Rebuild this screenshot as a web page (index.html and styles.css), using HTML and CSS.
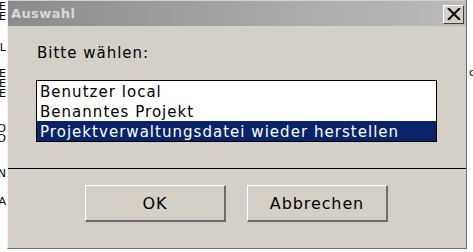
FILE: index.html
```html
<!DOCTYPE html>
<html>
<head>
<meta charset="utf-8">
<link rel="stylesheet" href="styles.css">
</head>
<body>
<div class="desk">
  <div class="bg-left">
    <span class="frag f1">E</span>
    <span class="frag f2">E</span>
    <span class="frag f3">L</span>
    <span class="frag f4">E</span>
    <span class="frag f5">E</span>
    <span class="frag f6">E</span>
    <span class="frag f7">O</span>
    <span class="frag f8">O</span>
    <span class="frag f9">N</span>
    <span class="frag f10">A</span>
  </div>
  <div class="dialog">
    <div class="titlebar">
      <span class="title">Auswahl</span>
      <span class="close"><svg width="14" height="12" viewBox="0 0 14 12"><path d="M1 0 L13 12 M13 0 L1 12" stroke="#000" stroke-width="2"/></svg></span>
    </div>
    <div class="content">
      <div class="prompt">Bitte wählen:</div>
      <div class="listbox">
        <div class="item">Benutzer local</div>
        <div class="item">Benanntes Projekt</div>
        <div class="item selected">Projektverwaltungsdatei wieder herstellen</div>
      </div>
    </div>
    <div class="separator"></div>
    <div class="buttons">
      <div class="btn">OK</div>
      <div class="btn">Abbrechen</div>
    </div>
  </div>
  <div class="bg-right">
    <span class="frag r1">c</span>
  </div>
</div>
</body>
</html>
```
FILE: styles.css
```css
html, body {
  margin: 0;
  padding: 0;
  background: #fff;
}
.desk {
  position: relative;
  width: 473px;
  height: 252px;
  overflow: hidden;
  display: flex;
  align-items: flex-start;
  font-family: "DejaVu Sans", sans-serif;
}
.bg-left {
  position: relative;
  width: 7px;
  height: 252px;
  flex: none;
  overflow: hidden;
}
.bg-right {
  position: relative;
  flex: 1;
  height: 252px;
  overflow: hidden;
}
.frag {
  position: absolute;
  font-family: "DejaVu Sans", sans-serif;
  font-size: 11px;
  line-height: 9px;
  height: 9px;
  color: #000;
}
.bg-left .frag { right: 1px; }
.f1 { top: 2px; }
.f2 { top: 12px; }
.f3 { top: 43px; }
.f4 { top: 69px; }
.f5 { top: 79px; }
.f6 { top: 89px; }
.f7 { top: 124px; }
.f8 { top: 134px; }
.f9 { top: 169px; }
.f10 { top: 197px; }
.r1 { left: 2px; top: 68px; }

.dialog {
  width: 458px;
  height: 248px;
  flex: none;
  background: #d4d0c8;
  border-left: 1px solid #f4f3ef;
  border-right: 1px solid #707070;
  border-bottom: 1px solid #707070;
  display: flex;
  flex-direction: column;
}
.titlebar {
  margin-top: 1px;
  height: 25px;
  background: linear-gradient(to right, #8c8c8c, #bcbcbc);
  display: flex;
  align-items: center;
  justify-content: space-between;
  padding: 0 2px 0 3px;
  flex: none;
}
.title {
  font-family: "DejaVu Sans", sans-serif;
  font-weight: bold;
  font-size: 13px;
  letter-spacing: 0.4px;
  color: #d8d8d8;
}
.close {
  width: 19px;
  height: 17px;
  margin-top: 1px;
  background: #d4d0c8;
  border-top: 1px solid #fff;
  border-left: 1px solid #fff;
  border-right: 1px solid #404040;
  border-bottom: 1px solid #404040;
  display: flex;
  align-items: center;
  justify-content: center;
}
.content {
  padding: 18px 0 0 28px;
  flex: none;
}
.prompt {
  font-size: 15px;
  line-height: 18px;
  letter-spacing: 1px;
  color: #000;
  padding-left: 1px;
}
.listbox {
  margin-top: 18px;
  width: 399px;
  border: 1px solid #000;
  background: #fff;
}
.item {
  font-size: 15px;
  line-height: 20px;
  height: 20px;
  box-sizing: border-box;
  padding: 1px 0 0 3px;
  letter-spacing: 1.03px;
  color: #000;
  white-space: nowrap;
}
.item.selected {
  background: #0a246a;
  color: #fff;
}
.separator {
  margin-top: 26px;
  height: 1px;
  background: #000;
  flex: none;
}
.buttons {
  display: flex;
  gap: 21px;
  padding: 16px 0 0 77px;
}
.btn {
  width: 138px;
  height: 34px;
  box-sizing: content-box;
  border-top: 1px solid #fff;
  border-left: 1px solid #fff;
  border-right: 2px solid #6e6e6e;
  border-bottom: 2px solid #6e6e6e;
  display: flex;
  align-items: center;
  justify-content: center;
  font-size: 16px;
  letter-spacing: 0.9px;
  color: #000;
}
```
